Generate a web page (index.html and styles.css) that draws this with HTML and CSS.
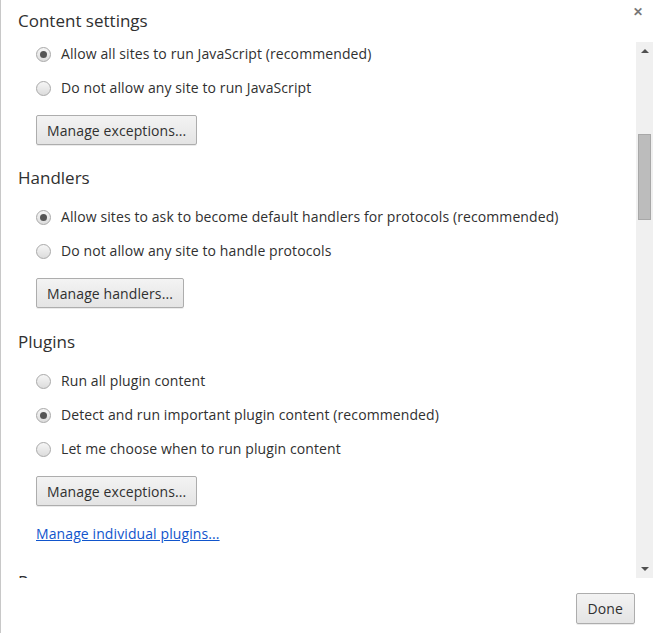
FILE: index.html
```html
<!DOCTYPE html>
<html>
<head>
<meta charset="utf-8">
<link rel="stylesheet" href="styles.css">
</head>
<body>
<div class="dialog">
  <div class="titlebar">
    <h1 class="title">Content settings</h1>
    <span class="close">&#x2715;</span>
  </div>
  <div class="middle">
    <div class="scroller">
      <div class="content">
        <div class="section first">
          <label class="row"><span class="radio checked"></span>Allow all sites to run JavaScript (recommended)</label>
          <label class="row"><span class="radio"></span>Do not allow any site to run JavaScript</label>
          <button class="btn">Manage exceptions...</button>
        </div>
        <div class="section">
          <h2 class="heading">Handlers</h2>
          <label class="row"><span class="radio checked"></span>Allow sites to ask to become default handlers for protocols (recommended)</label>
          <label class="row"><span class="radio"></span>Do not allow any site to handle protocols</label>
          <button class="btn">Manage handlers...</button>
        </div>
        <div class="section">
          <h2 class="heading plugins">Plugins</h2>
          <label class="row"><span class="radio"></span>Run all plugin content</label>
          <label class="row"><span class="radio checked"></span>Detect and run important plugin content (recommended)</label>
          <label class="row"><span class="radio"></span>Let me choose when to run plugin content</label>
          <button class="btn">Manage exceptions...</button>
          <a class="link" href="#">Manage individual plugins...</a>
        </div>
        <div class="section">
          <h2 class="heading last">Pop-ups</h2>
        </div>
      </div>
    </div>
    <div class="scrollbar">
      <span class="arrow up"></span>
      <div class="track"><div class="thumb"></div></div>
      <span class="arrow down"></span>
    </div>
  </div>
  <div class="footer">
    <button class="btn done">Done</button>
  </div>
</div>
</body>
</html>
```
FILE: styles.css
```css
html, body {
  margin: 0;
  padding: 0;
  background: #fff;
}
body {
  font-family: "Open Sans", "Noto Sans", sans-serif;
  font-size: 14px;
  letter-spacing: 0.1px;
  color: #303030;
}
.dialog {
  width: 653px;
  height: 633px;
  box-sizing: border-box;
  border-left: 1px solid #c8c8c8;
  display: flex;
  flex-direction: column;
}
.titlebar {
  height: 42px;
  display: flex;
  justify-content: space-between;
  align-items: flex-start;
}
.title {
  margin: 9px 0 0 17px;
  font-size: 17px;
  font-weight: normal;
  line-height: 24px;
  letter-spacing: 0;
  color: #303030;
}
.close {
  margin: 3px 10px 0 0;
  font-size: 12px;
  color: #777;
  font-weight: bold;
}
.middle {
  height: 536px;
  display: flex;
}
.scroller {
  flex: 1;
  overflow: hidden;
}
.content {
  padding-left: 35px;
}
.section {
  display: flex;
  flex-direction: column;
  align-items: flex-start;
}
.row {
  display: flex;
  align-items: center;
  height: 34px;
  line-height: 20px;
}
.section.first {
  margin-top: -5px;
}
.radio {
  width: 13px;
  height: 13px;
  border-radius: 50%;
  border: 1px solid #a9a9a9;
  background: linear-gradient(#f6f6f6, #dcdcdc);
  margin-right: 10px;
  position: relative;
  flex: none;
}
.radio.checked::after {
  content: "";
  position: absolute;
  left: 3px;
  top: 3px;
  width: 7px;
  height: 7px;
  border-radius: 50%;
  background: #555;
}
.btn {
  font-family: inherit;
  font-size: 14px;
  letter-spacing: 0.1px;
  color: #303030;
  height: 30px;
  padding: 0 10px;
  border: 1px solid #adadad;
  border-radius: 2px;
  background: linear-gradient(#f3f3f3, #e4e4e4);
  box-shadow: 0 1px 0 rgba(0,0,0,0.08);
  margin-top: 10px;
}
.heading {
  margin: 21px 0 10px -18px;
  font-size: 17px;
  font-weight: normal;
  line-height: 24px;
  letter-spacing: 0;
  color: #303030;
}
.heading.plugins {
  margin-top: 22px;
}
.heading.last {
  margin-top: 26px;
}
.link {
  margin-top: 18px;
  color: #1155cc;
  text-decoration: underline;
  line-height: 20px;
}
.scrollbar {
  width: 17px;
  background: #f0f0f0;
  display: flex;
  flex-direction: column;
  align-items: center;
}
.arrow {
  width: 0;
  height: 0;
  border-left: 4px solid transparent;
  border-right: 4px solid transparent;
  margin: 7px 0;
}
.arrow.up {
  border-bottom: 4px solid #505050;
}
.arrow.down {
  border-top: 4px solid #505050;
}
.track {
  flex: 1;
  width: 100%;
  display: flex;
  justify-content: center;
}
.thumb {
  margin-top: 74px;
  width: 11px;
  height: 84px;
  background: #bcbcbc;
  border: 1px solid #a8a8a8;
}
.footer {
  flex: 1;
  display: flex;
  justify-content: flex-end;
  align-items: flex-start;
  padding: 15px 18px 0 0;
}
.btn.done {
  margin-top: 0;
  height: 31px;
  padding: 0 11px;
  font-size: 14px;
}
```
